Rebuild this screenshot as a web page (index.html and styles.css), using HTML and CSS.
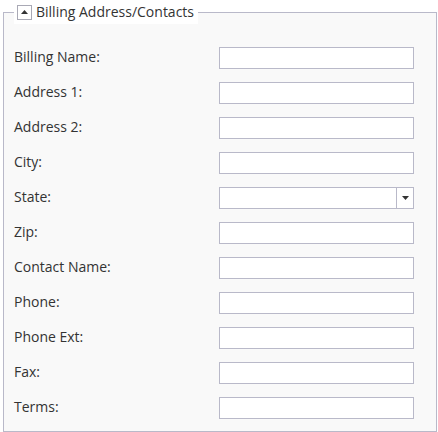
FILE: index.html
```html
<!DOCTYPE html>
<html lang="en">
<head>
    <meta charset="UTF-8">
    <title>Billing Address/Contacts</title>
    <link rel="stylesheet" href="styles.css">
</head>
<body>
    <fieldset class="panel">
        <legend class="panel-title">
            <span class="toggle">
                <svg width="7" height="4" viewBox="0 0 7 4"><path d="M0 4 L3.5 0 L7 4 Z" fill="#333"/></svg>
            </span>
            <span class="title-text">Billing Address/Contacts</span>
        </legend>
        <div class="form-grid">
            <label class="field-label">Billing Name:</label>
            <input class="field-input" type="text">
            <label class="field-label">Address 1:</label>
            <input class="field-input" type="text">
            <label class="field-label">Address 2:</label>
            <input class="field-input" type="text">
            <label class="field-label">City:</label>
            <input class="field-input" type="text">
            <label class="field-label">State:</label>
            <div class="combo">
                <span class="combo-text"></span>
                <span class="combo-btn">
                    <svg width="7" height="4" viewBox="0 0 7 4"><path d="M0 0 L7 0 L3.5 4 Z" fill="#333"/></svg>
                </span>
            </div>
            <label class="field-label">Zip:</label>
            <input class="field-input" type="text">
            <label class="field-label">Contact Name:</label>
            <input class="field-input" type="text">
            <label class="field-label">Phone:</label>
            <input class="field-input" type="text">
            <label class="field-label">Phone Ext:</label>
            <input class="field-input" type="text">
            <label class="field-label">Fax:</label>
            <input class="field-input" type="text">
            <label class="field-label">Terms:</label>
            <input class="field-input" type="text">
        </div>
    </fieldset>
</body>
</html>
```
FILE: styles.css
```css
body {
    margin: 0;
    background: #fff;
    font-family: "Open Sans", "Noto Sans", sans-serif;
    font-size: 14px;
    color: #333;
}
.panel {
    box-sizing: border-box;
    width: 434px;
    height: 432px;
    margin: 0 0 0 3px;
    padding: 23px 10px 12px 10px;
    border: 1px solid #b9b9c9;
    background: #f9f9f9;
}
.panel-title {
    display: flex;
    align-items: center;
    height: 24px;
    padding: 0 4px 0 3px;
    background: #fff;
}
.toggle {
    box-sizing: border-box;
    width: 15px;
    height: 15px;
    border: 1px solid #a9a9b5;
    background: #fff;
    display: flex;
    align-items: center;
    justify-content: center;
    margin-right: 4px;
}
.title-text {
    line-height: 24px;
}
.form-grid {
    display: grid;
    grid-template-columns: 205px 195px;
    row-gap: 13px;
}
.field-label {
    line-height: 20px;
    height: 22px;
}
.field-input,
.combo {
    box-sizing: border-box;
    width: 195px;
    height: 22px;
    margin: 0;
    border: 1px solid #b9b9c9;
    background: #fff;
    border-radius: 0;
    outline: none;
}
.combo {
    display: flex;
}
.combo-text {
    flex: 1;
}
.combo-btn {
    width: 16px;
    border-left: 1px solid #b9b9c9;
    display: flex;
    align-items: center;
    justify-content: center;
}
```
